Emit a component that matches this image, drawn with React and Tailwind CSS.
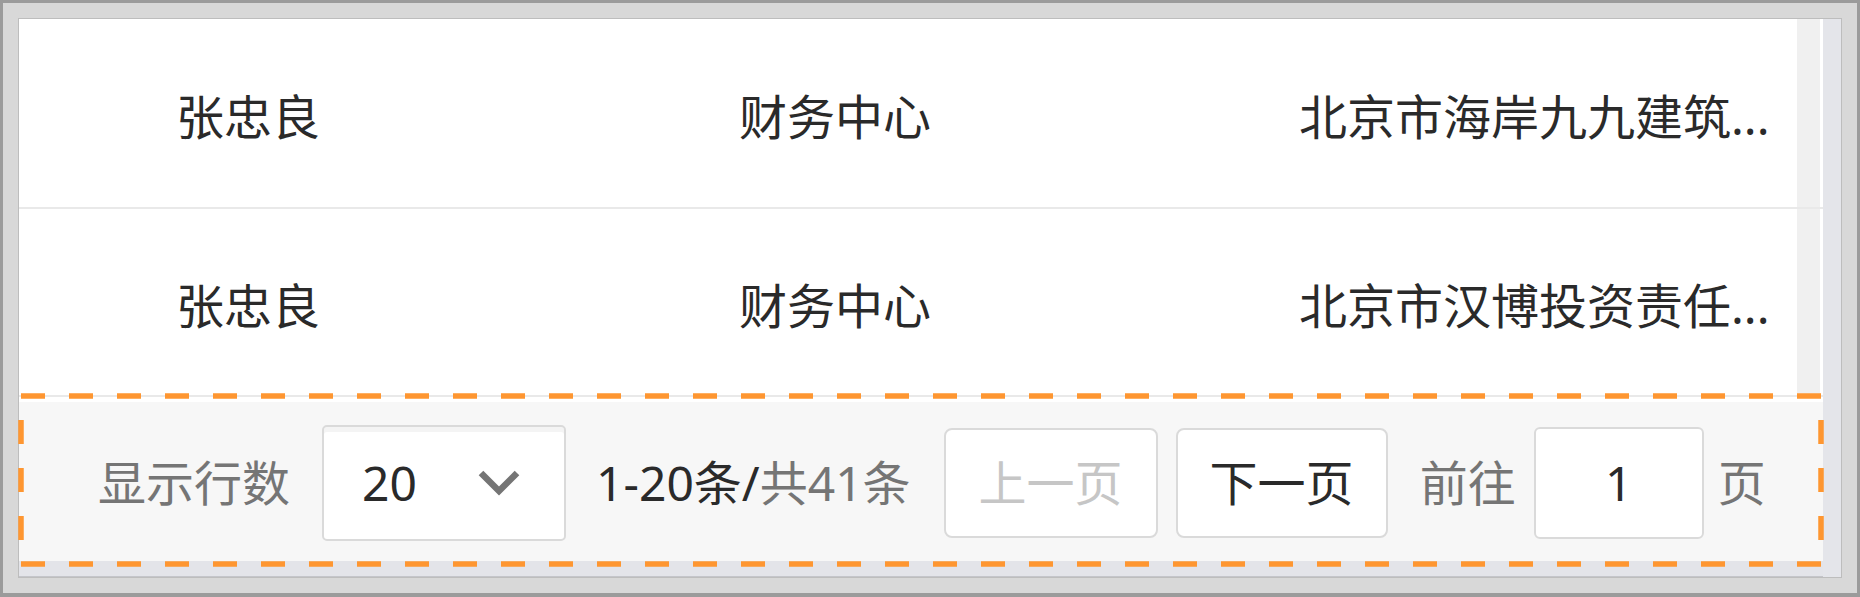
import React from "react";

const FONT = { fontFamily: "'Noto Sans', 'Noto Sans CJK SC', sans-serif" };

function Row({ name, dept, company, h }) {
  return (
    <div className="flex border-b-2 border-[#e9e9e9]" style={{ height: h }}>
      <div className="flex-1 flex items-center pl-[157px] pt-[7px] text-[#2a2a2a] text-[48px] leading-none">
        <div className="w-[563px] shrink-0">{name}</div>
        <div className="w-[560px] shrink-0">{dept}</div>
        <div className="whitespace-nowrap">{company}</div>
      </div>
      <div className="w-[23px] bg-[#f0f0f0]" />
      <div className="w-[3px] bg-white" />
    </div>
  );
}

export default function App() {
  return (
    <div className="relative w-[1860px] h-[597px]" style={FONT}>
      <div className="w-[1860px] h-[597px] border-[3px] border-b-4 border-[#9b9b9b] bg-[#d8d8d8] p-[15px]">
        <div className="w-full h-full flex border border-[#bdbdbd] bg-[#e4e5ea]">
          <div className="flex-1 flex flex-col">
            <div className="bg-white">
              <Row h={190} name="张忠良" dept="财务中心" company="北京市海岸九九建筑..." />
              <Row h={188} name="张忠良" dept="财务中心" company="北京市汉博投资责任..." />
              <div className="h-[5px] bg-white" />
            </div>
            <div className="h-[159px] bg-[#f7f7f7] flex items-center pl-[79px] pt-[2px] text-[48px] leading-none whitespace-nowrap">
              <span className="text-[#757575]">显示行数</span>
              <div className="ml-[32px] w-[244px] h-[116px] bg-white border-2 border-[#dadada] rounded-[5px] shadow-[inset_0_5px_0_#f4f4f4] flex items-center justify-between pl-[38px] pr-[44px]">
                <span className="text-[#2a2a2a]">20</span>
                <svg width="42" height="28" viewBox="0 0 42 28">
                  <polyline points="3,4 21,22 39,4" fill="none" stroke="#757575" strokeWidth="6.5" strokeLinejoin="miter" />
                </svg>
              </div>
              <span className="ml-[30px] text-[#2a2a2a]">1-20条/<span className="text-[#757575]">共41条</span></span>
              <div className="ml-[33px] w-[214px] h-[110px] bg-white border-2 border-[#dadada] rounded-[8px] flex items-center justify-center text-[#c6c6c6]">上一页</div>
              <div className="ml-[18px] w-[212px] h-[110px] bg-white border-2 border-[#dadada] rounded-[8px] flex items-center justify-center text-[#2a2a2a]">下一页</div>
              <span className="ml-[32px] text-[#757575]">前往</span>
              <div className="ml-[18px] w-[170px] h-[112px] bg-white border-2 border-[#dadada] rounded-[6px] flex items-center justify-center text-[#2a2a2a]">1</div>
              <span className="ml-[14px] text-[#757575]">页</span>
            </div>
            <div className="flex-1 bg-[#e3e4e9] border-b border-[#c4c5ca]" />
          </div>
          <div className="w-[18px] bg-[#e4e5ea]" />
        </div>
      </div>
      <svg className="absolute left-0 top-0 pointer-events-none" width="1860" height="597">
        <rect x="21" y="396" width="1800" height="168" fill="none" stroke="#fe9631" strokeWidth="5.5" strokeDasharray="24 24" />
      </svg>
    </div>
  );
}
